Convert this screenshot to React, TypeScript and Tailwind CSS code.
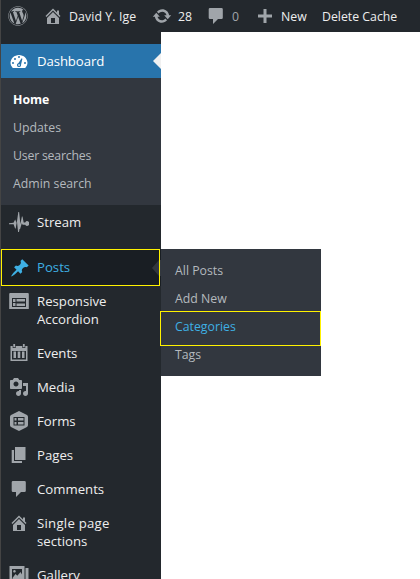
import type { ReactNode } from "react";
import { FaWordpress } from "react-icons/fa";

const paths = {
  home: "M16 8.5l1.53 1.53-1.06 1.06L10 4.6l-6.47 6.49-1.06-1.06L10 2.5l4 4v-2h2v4zm-6-2.46l6 5.99V18H4v-5.97zM12 17v-5H8v5h4z",
  comment: "M4 2h11.500a1.300 1.300 0 0 1 1.300 1.300v8.400a1.300 1.300 0 0 1-1.300 1.300H12l-5 5v-5H4a1.300 1.300 0 0 1-1.300-1.300V3.300A1.300 1.300 0 0 1 4 2z",
  pin: "M10.44 3.02l1.82-1.82 6.36 6.35-1.83 1.82c-1.05-.68-2.48-.57-3.41.36l-.75.75c-.92.93-1.04 2.35-.35 3.41l-1.83 1.82-2.41-2.41-2.8 2.79c-.42.42-3.38 2.71-3.8 2.29s1.86-3.39 2.28-3.81l2.79-2.79L4.1 9.36l1.83-1.82c1.05.69 2.48.57 3.4-.36l.75-.75c.93-.92 1.05-2.35.36-3.41z",
  media: "M13 11V4c0-.55-.45-1-1-1h-1.67L9 1H5L3.67 3H2c-.55 0-1 .45-1 1v7c0 .55.45 1 1 1h10c.55 0 1-.45 1-1zM7 4.500c1.38 0 2.500 1.12 2.500 2.500S8.38 9.500 7 9.500 4.500 8.38 4.500 7 5.62 4.500 7 4.500zM14 6h5v10.500c0 1.38-1.12 2.500-2.500 2.500S14 17.88 14 16.500s1.12-2.500 2.500-2.500c.17 0 .34.02.5.05V9h-3V6zm-4 8.05V13h2v3.500c0 1.38-1.12 2.500-2.500 2.500S7 17.88 7 16.500 8.12 14 9.500 14c.17 0 .34.02.5.05z",
  page: "M6 15V2h10.500v13H6zm-1 1h8v2H2.700V5H5v11z",
  update: "M10.2 3.28c3.53 0 6.43 2.61 6.92 6h2.08l-3.5 4-3.5-4h2.32c-.45-1.97-2.21-3.45-4.32-3.45-1.45 0-2.73.71-3.54 1.78L4.95 5.66C6.23 4.2 8.11 3.28 10.2 3.28zm-.4 13.44c-3.52 0-6.43-2.61-6.92-6H.8l3.5-4c1.17 1.33 2.33 2.67 3.5 4H5.48c.45 1.97 2.21 3.45 4.32 3.45 1.45 0 2.73-.71 3.54-1.78l1.71 1.95c-1.28 1.46-3.15 2.38-5.25 2.38z",
  plus: "M17 8.5v3h-5.5V17h-3v-5.5H3v-3h5.5V3h3v5.5z",
  dashboard:
    "M3.76 17h12.48c1.07-1.37 2.26-3.07 2.26-4.92C18.500 7.660 14.600 4.070 10 4.070s-8.500 3.580-8.500 8c0 1.850 1.160 3.560 2.260 4.930zM9 6a1 1 0 1 1 2 0 1 1 0 0 1-2 0zM5 8a1 1 0 1 1 2 0 1 1 0 0 1-2 0zM12.600 7.200l.8.500-1.300 5.800a2.100 2.100 0 1 1-2.600-1.600zM10 13.200a.8.8 0 1 0 .1 0zM3 12a1 1 0 1 1 2 0 1 1 0 0 1-2 0zM15 12a1 1 0 1 1 2 0 1 1 0 0 1-2 0z",
  calendar:
    "M1.500 3h2.200v2h3V3h6.600v2h3V3h2.200v15h-17zM3 8v8.500h14V8zM4.500 8.500h2.500v6.500H4.500zM8.700 8.500h2.600v6.500H8.700zM13 8.500h2.500v6.500H13zM4.300 1h1.800v3.300H4.300zM13.900 1h1.800v3.300h-1.800z",
  accordion:
    "M1.200 2h17.600a1 1 0 0 1 1 1v15H.2V3a1 1 0 0 1 1-1zM3 7v9h14V7zM4 8h2.500v3H4zM7.500 8H16v2.500H7.500zM4 12h2.500v3H4zM7.500 12.500H16V15H7.500z",
  forms:
    "M10 0l7 3.400c1.400.7 2 1.300 2 2.600v8c0 1.300-.6 1.900-2 2.600L10 20l-7-3.400C1.600 15.900 1 15.300 1 14V6c0-1.300.6-1.900 2-2.600zM4.500 6v8.500h11V6zM5.500 7h2v2.500h-2zM9 7h5.500v2.500H9zM5.500 11h2v2.500h-2zM9 11h5.500v2.500H9z",
  gallery:
    "M.5 1h15v16H.5zM3 4v10h10V4zM3.500 13l3-4 1.800 1.800L11.500 7l1.500 2.500V14H3.500zM5.500 5a1.300 1.300 0 1 1-.1 0zM16.500 3h3v16H5v-1h11.500z",
};

function Icon({ name }: { name: keyof typeof paths }) {
  return (
    <svg viewBox="0 0 20 20" className="size-5 shrink-0" fill="currentColor" fillRule="evenodd">
      <path d={paths[name]} />
    </svg>
  );
}

function StreamIcon() {
  return (
    <svg viewBox="0 0 20 20" className="size-5 shrink-0" fill="currentColor">
      <path d="M0 11.300L4.500 10.800l1.700-3.300 1.500 4L9.300 0h.8l1.300 12 1.500-7.500h.6l1.200 6h1.500a2.300 2.300 0 1 1 0 2.200h-2.600l-.8-1.400-1.700 5.700h-.6L10 20h-.9l-1.200-11-1.200 7.500h-.6l-1.500-4.200H0z" />
    </svg>
  );
}

function Row({ icon, children, className = "" }: { icon: ReactNode; children: ReactNode; className?: string }) {
  return (
    <li className={`flex min-h-[34px] shrink-0 ${className}`}>
      <span className="flex h-[34px] w-9 shrink-0 items-center justify-center text-[#a0a5aa]">{icon}</span>
      <span className="py-2 text-[13.2px] leading-[18px] whitespace-nowrap">{children}</span>
    </li>
  );
}

export default function App() {
  return (
    <div className="flex h-[579px] w-[420px] flex-col overflow-hidden bg-white font-['Open_Sans','Noto_Sans',sans-serif] text-[#eeeeee]">
      <header className="flex h-8 shrink-0 items-center border-l border-[#444] bg-[#23282d] text-[12.3px] whitespace-nowrap">
        <span className="ml-[7px] flex w-[35px] text-[#a0a5aa]"><FaWordpress size={20} /></span>
        <span className="flex w-[109px] items-center gap-[6px]"><span className="text-[#a0a5aa]"><Icon name="home" /></span><span className="pt-0.5 tracking-[0.1px]">David Y. Ige</span></span>
        <span className="flex w-[54px] items-center gap-[6px]"><span className="text-[#a0a5aa]"><Icon name="update" /></span><span className="pt-0.5">28</span></span>
        <span className="flex w-[49px] items-center gap-[6px] text-[#a0a5aa]"><Icon name="comment" /><span className="pt-0.5">0</span></span>
        <span className="flex w-[67px] items-center gap-[6px]"><span className="text-[#a0a5aa]"><Icon name="plus" /></span><span className="pt-0.5">New</span></span>
        <span className="pt-0.5">Delete Cache</span>
      </header>
      <div className="flex min-h-0 flex-1 items-start">
        <nav className="h-full w-[161px] shrink-0 overflow-hidden border-l border-[#444] bg-[#23282d] pt-3">
          <ul>
            <li className="flex h-[34px] items-center bg-[#2874ac] text-white">
              <span className="flex w-9 justify-center"><Icon name="dashboard" /></span>
              <span className="flex-1 pt-px text-[13.2px] tracking-[-0.1px]">Dashboard</span>
              <span className="h-0 w-0 border-y-8 border-r-8 border-y-transparent border-r-[#f1f1f1]" />
            </li>
            <li className="h-[127px] bg-[#32373f] pt-2 pl-3 text-[12.3px] leading-7 text-[#b4b9be]">
              <p className="font-bold text-white">Home</p>
              <p>Updates</p>
              <p className="tracking-[-0.2px]">User searches</p>
              <p>Admin search</p>
            </li>
            <Row icon={<StreamIcon />}>Stream</Row>
            <li className="mt-[10px] flex h-[37px] items-center bg-[#191e23] text-[#3eb0e4]">
              <span className="flex h-full w-[159px] items-center border border-[#fff200]">
                <span className="flex w-[35px] justify-center"><Icon name="pin" /></span>
                <span className="flex-1 text-[13.2px]">Posts</span>
                <span className="h-0 w-0 border-y-8 border-r-[7px] border-y-transparent border-r-[#32373f]" />
              </span>
              <span className="h-4 w-px bg-[#32373f]" />
            </li>
            <Row className="-mt-[2px]" icon={<Icon name="accordion" />}>Responsive<br />Accordion</Row>
            <Row icon={<Icon name="calendar" />}>Events</Row>
            <Row icon={<Icon name="media" />}>Media</Row>
            <Row icon={<Icon name="forms" />}>Forms</Row>
            <Row icon={<Icon name="page" />}>Pages</Row>
            <Row icon={<Icon name="comment" />}>Comments</Row>
            <Row icon={<Icon name="home" />}><span className="tracking-[0.25px]">Single page</span><br />sections</Row>
            <Row icon={<Icon name="gallery" />}>Gallery</Row>
          </ul>
        </nav>
        <ul className="mt-[217px] h-[127px] w-40 bg-[#32373f] pt-2 text-[12.3px] leading-7 text-[#b4b9be]">
          <li className="pl-[14px]">All Posts</li>
          <li className="pl-[14px]">Add New</li>
          <li className="-mt-[2px] -mb-[5px] -ml-px h-[35px] border border-[#fff200] pt-px pl-[14px] text-[#3eb0e4]">Categories</li>
          <li className="pl-[14px]">Tags</li>
        </ul>
      </div>
    </div>
  );
}
